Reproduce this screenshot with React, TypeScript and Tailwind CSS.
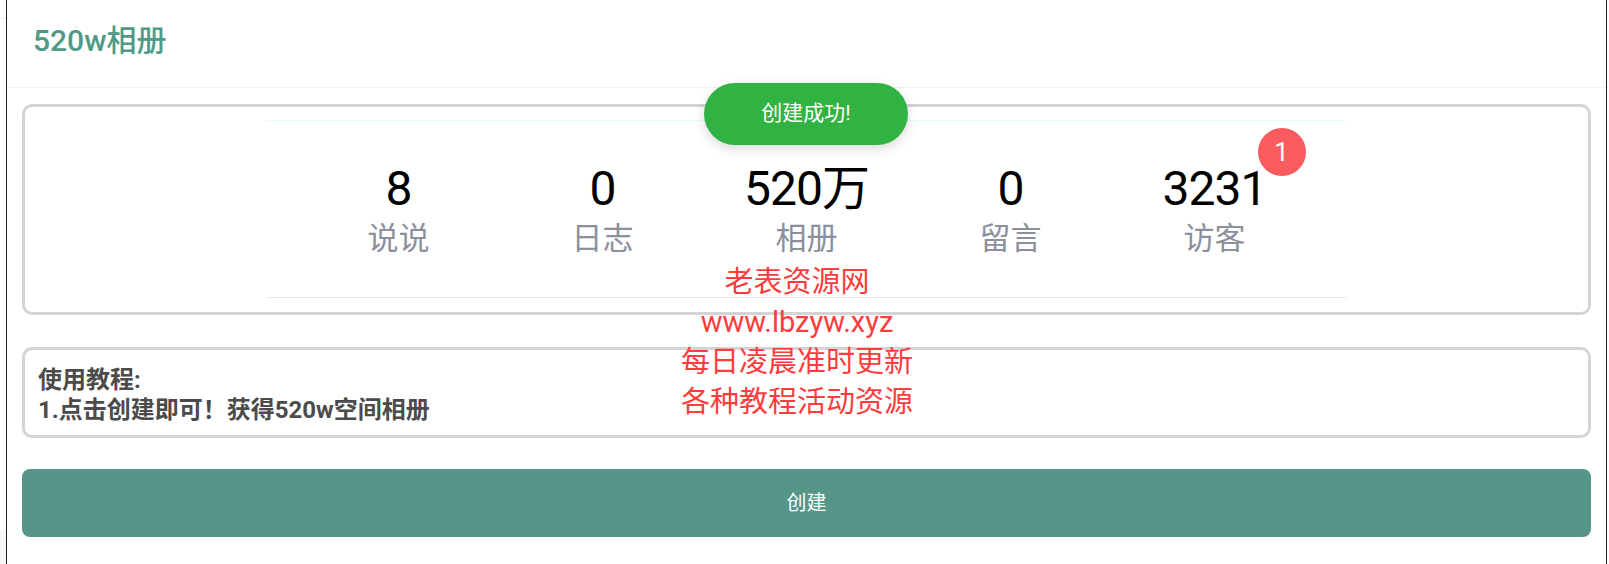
import React from "react"

const stats = [
  { value: "8", label: "说说" },
  { value: "0", label: "日志" },
  { value: "520万", label: "相册" },
  { value: "0", label: "留言" },
  { value: "3231", label: "访客", badge: 1 },
]

const font = { fontFamily: '"Roboto", "Noto Sans CJK SC", sans-serif' }

export default function App() {
  return (
    <div className="relative flex h-[564px] w-full overflow-hidden bg-white" style={font}>
      {/* left gutter */}
      <div className="flex w-[6px] flex-col">
        <div className="h-[18px]" />
        <div className="h-px bg-[#ececec]" />
        <div className="flex-1" />
        <div className="h-[34px] bg-[#f5f5f5]" />
      </div>

      <div className="flex flex-1 flex-col border-x border-[#222]">
        {/* header */}
        <div className="flex h-[88px] items-center border-b border-[#f3f3f3] pb-[6px] pl-[26px]">
          <h1 className="text-[30px] font-medium text-[#4f9a87]">520w相册</h1>
        </div>

        <div className="flex flex-col px-[15px] pt-[16px]">
          {/* stats */}
          <div className="rounded-[10px] border-[3px] border-[#d4d4d4] pb-[14px] pt-[13px]">
            <div className="mx-auto flex h-[178px] w-[1080px] justify-center border-b border-t border-b-[#e6e6e6] border-t-[#e8fbfb] pt-[40px]">
              {stats.map((s) => (
                <div key={s.label} className="relative flex w-[204px] flex-col items-center">
                  <span className="text-[48px] leading-[56px] tracking-[-1px] text-black">{s.value}</span>
                  <span className="text-[31px] leading-[44px] text-[#8c909c]">{s.label}</span>
                  {s.badge && (
                    <span className="absolute left-[145px] top-[-33px] flex h-[48px] w-[48px] items-center justify-center rounded-full bg-[#f95b5f] text-[26px] text-white">
                      {s.badge}
                    </span>
                  )}
                </div>
              ))}
            </div>
          </div>

          {/* tutorial */}
          <div className="mt-[32px] rounded-[10px] border-[3px] border-[#d4d4d4] px-[13px] pb-[10px] pt-[15px] text-[24px] font-bold leading-[30px] text-[#4b4b4b]">
            <p>使用教程:</p>
            <p>1.点击创建即可！获得520w空间相册</p>
          </div>

          <button className="mt-[31px] flex h-[68px] items-center justify-center rounded-lg bg-[#559689] text-[20px] text-white">
            创建
          </button>
        </div>
      </div>
      <div className="w-[2px]" />

      {/* toast */}
      <div className="absolute left-[704px] top-[83px] flex h-[62px] w-[204px] items-center justify-center rounded-full bg-[#31b343] text-[21px] text-white shadow-[0_4px_12px_rgba(0,0,0,0.15)]">
        创建成功!
      </div>

      {/* watermark */}
      <div className="pointer-events-none absolute left-[597px] top-[262px] w-[400px] text-center text-[29px] leading-[40px] text-[#fd3c3c]">
        <p>老表资源网</p>
        <p>www.lbzyw.xyz</p>
        <p>每日凌晨准时更新</p>
        <p>各种教程活动资源</p>
      </div>
    </div>
  )
}
